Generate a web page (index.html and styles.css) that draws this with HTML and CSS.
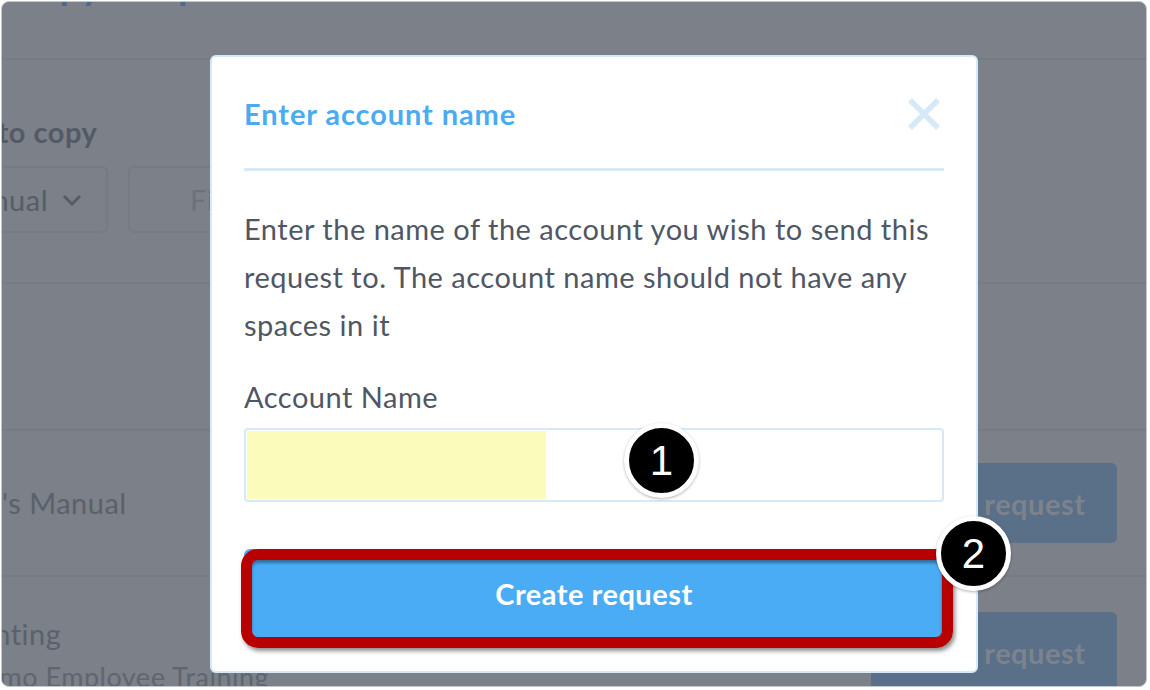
FILE: index.html
```html
<!DOCTYPE html>
<html lang="en">
<head>
<meta charset="utf-8">
<title>Enter account name</title>
<link rel="stylesheet" href="styles.css">
</head>
<body>
<div class="screen">
  <div class="page">
    <header class="page-head">
      <h1 class="page-title">Copy template</h1>
    </header>
    <section class="pick">
      <h2 class="pick-title">Select template to copy</h2>
      <div class="pick-controls">
        <div class="select">
          <span class="select-value">Employee Manual</span>
          <svg class="chev" viewBox="0 0 20 12" width="20" height="12"><path d="M2 2 L10 10 L18 2" fill="none" stroke="#555c66" stroke-width="3"/></svg>
        </div>
        <div class="search">Filter templates</div>
      </div>
    </section>
    <div class="row row-empty"></div>
    <div class="row">
      <div class="row-text">
        <div class="row-name name-1">User's Manual</div>
      </div>
      <div class="row-btn">Send request</div>
    </div>
    <div class="row row-last">
      <div class="row-text">
        <div class="row-name name-2">Printing</div>
        <div class="row-sub">Demo Employee Training</div>
      </div>
      <div class="row-btn">Send request</div>
    </div>
  </div>

  <div class="modal">
    <div class="modal-head">
      <h3 class="modal-title">Enter account name</h3>
      <svg class="close" viewBox="0 0 34 34" width="34" height="34"><path d="M3 3 L31 31 M31 3 L3 31" stroke="#d6e9f8" stroke-width="5.5" fill="none"/></svg>
    </div>
    <p class="modal-text">Enter the name of the account you wish to send this request to. The account name should not have any spaces in it</p>
    <label class="modal-label">Account Name</label>
    <div class="input"><span class="hl"></span></div>
    <div class="primary">Create request</div>
  </div>

  <div class="mark"></div>
  <div class="badge badge-1">1</div>
  <div class="badge badge-2">2</div>
</div>
</body>
</html>
```
FILE: styles.css
```css
html, body {
  margin: 0;
  padding: 0;
  background: #ffffff;
}
body {
  font-family: "Lato", "Open Sans", sans-serif;
}
.screen {
  position: relative;
  margin: 1px;
  width: 1146px;
  height: 686px;
  border: 1px solid #c4c6c9;
  border-radius: 8px;
  overflow: hidden;
  background: #7b8089;
  box-sizing: border-box;
}
.page {
  display: flex;
  flex-direction: column;
  color: #565d68;
  letter-spacing: 0.5px;
}
.page-head {
  height: 56px;
  border-bottom: 2px solid #747b85;
  overflow: hidden;
}
.page-title {
  margin: -41px 0 0 10px;
  font-size: 38px;
  font-weight: 700;
  color: #4c6a8f;
  line-height: 48px;
}
.pick {
  height: 224px;
  border-bottom: 2px solid #747b85;
  padding-top: 55px;
  box-sizing: border-box;
}
.pick-title {
  margin: 0 0 17px -220px;
  font-size: 29px;
  font-weight: 700;
  line-height: 34px;
  color: #535a65;
  white-space: nowrap;
}
.pick-controls {
  display: flex;
  gap: 20px;
  margin-left: -160px;
}
.select {
  width: 266px;
  height: 67px;
  box-sizing: border-box;
  border: 2px solid #747b85;
  border-radius: 6px;
  display: flex;
  align-items: center;
  justify-content: flex-end;
  gap: 14px;
  padding-right: 24px;
  font-size: 29px;
  color: #565d68;
  overflow: hidden;
}
.select-value {
  white-space: nowrap;
  flex: none;
}
.chev {
  flex: none;
}
.search {
  width: 400px;
  height: 67px;
  box-sizing: border-box;
  border: 2px solid #747b85;
  border-radius: 6px;
  display: flex;
  align-items: center;
  padding-left: 60px;
  font-size: 29px;
  color: #6c727b;
  white-space: nowrap;
}
.row {
  height: 146px;
  border-bottom: 2px solid #747b85;
  display: flex;
  align-items: center;
  justify-content: space-between;
  padding-right: 29px;
  box-sizing: border-box;
}
.row-empty {
  height: 147px;
}
.row-text {
  display: flex;
  flex-direction: column;
}
.row-name {
  font-size: 29px;
  line-height: 40px;
  color: #5a616b;
  white-space: nowrap;
}
.name-1 {
  margin-left: -61px;
}
.name-2 {
  margin-left: -44px;
  margin-top: 2px;
}
.row-sub {
  margin-left: -38px;
  margin-top: 3px;
  font-size: 27px;
  line-height: 40px;
  color: #5f666f;
  white-space: nowrap;
}
.row-btn {
  width: 246px;
  height: 80px;
  border-radius: 6px;
  background: #5a6f88;
  color: #7d838c;
  font-size: 29px;
  font-weight: 700;
  display: flex;
  align-items: center;
  justify-content: center;
  padding-left: 8px;
  box-sizing: border-box;
}
.row-last {
  align-items: flex-start;
  padding-top: 35px;
  border-bottom: none;
}

/* modal */
.modal {
  position: absolute;
  left: 208px;
  top: 53px;
  width: 768px;
  height: 618px;
  box-sizing: border-box;
  border: 2px solid #d6e9f8;
  border-radius: 6px;
  background: #ffffff;
  padding: 0 32px;
  display: flex;
  flex-direction: column;
  letter-spacing: 0.5px;
}
.modal-head {
  height: 114px;
  border-bottom: 3px solid #d6e9f8;
  display: flex;
  align-items: center;
  justify-content: space-between;
  padding-right: 3px;
  padding-top: 2px;
  box-sizing: border-box;
}
.modal-title {
  margin: 0;
  font-size: 29px;
  font-weight: 700;
  letter-spacing: 0.9px;
  color: #4aabf1;
}
.modal-text {
  margin: 34px 0 0;
  font-size: 29px;
  line-height: 48px;
  color: #4f5764;
}
.modal-label {
  margin-top: 24px;
  font-size: 29px;
  line-height: 48px;
  color: #4f5764;
}
.input {
  margin-top: 7px;
  height: 74px;
  box-sizing: border-box;
  border: 2px solid #d6e9f8;
  border-radius: 4px;
  padding: 1px;
  display: flex;
}
.hl {
  width: 299px;
  background: #fbfbbc;
}
.primary {
  margin-top: 47px;
  height: 92px;
  border-radius: 6px;
  background: #4aacf4;
  color: #ffffff;
  font-size: 29px;
  font-weight: 700;
  display: flex;
  align-items: center;
  justify-content: center;
  padding-bottom: 4px;
  box-sizing: border-box;
}

/* annotations */
.mark {
  position: absolute;
  left: 239px;
  top: 547px;
  width: 712px;
  height: 99px;
  box-sizing: border-box;
  border: 11px solid #b90000;
  border-radius: 17px;
  box-shadow: 2px 3px 4px rgba(0,0,0,0.45), inset 0 3px 3px rgba(0,0,0,0.35);
}
.badge {
  position: absolute;
  width: 65px;
  height: 65px;
  border-radius: 50%;
  background: #000000;
  border: 5px solid #ffffff;
  color: #ffffff;
  font-family: "Liberation Sans", Arial, sans-serif;
  font-size: 42px;
  line-height: 65px;
  text-align: center;
  box-shadow: 0 1px 3px rgba(0,0,0,0.3);
}
.badge-1 {
  left: 622px;
  top: 421px;
}
.badge-2 {
  left: 934px;
  top: 514px;
}
```
